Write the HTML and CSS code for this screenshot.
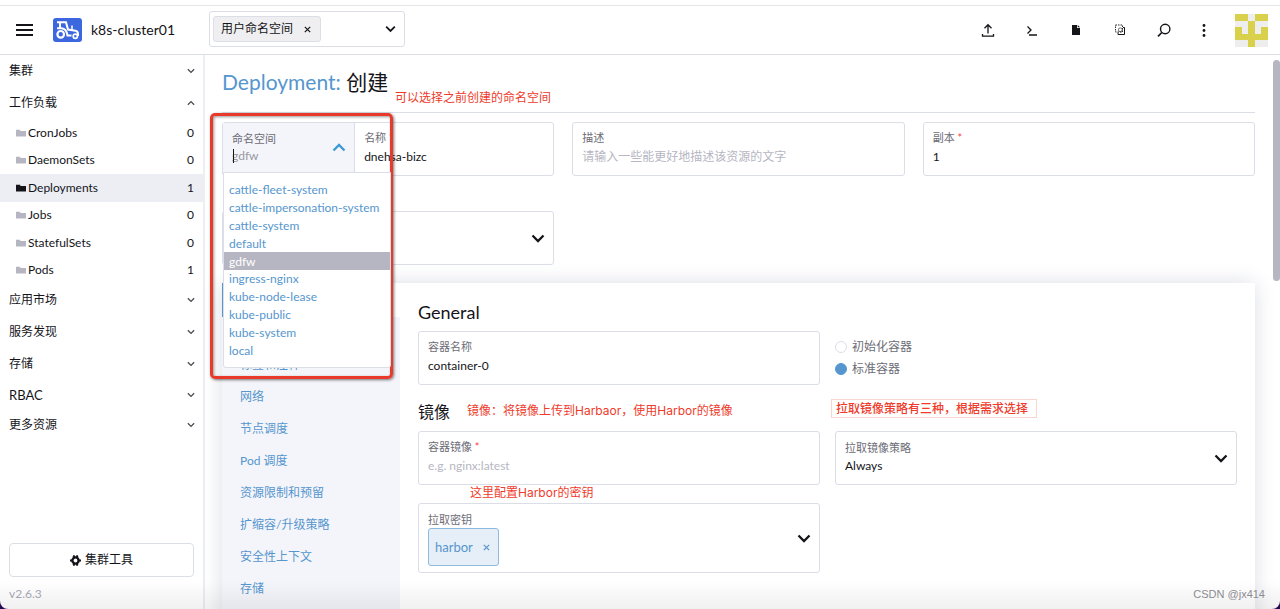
FILE: index.html
```
<!DOCTYPE html>
<html lang="zh-CN">
<head>
<meta charset="utf-8">
<meta name="viewport" content="width=device-width, initial-scale=1">
<title>Deployment: 创建</title>
<link rel="stylesheet" href="styles.css">
</head>
<body>
<svg class="defs" aria-hidden="true">
  <symbol id="chevron" viewBox="0 0 14 9"><path d="M1.500 1.500 7 7l5.500-5.500" fill="none" stroke="currentColor" stroke-width="2.300"/></symbol>
  <symbol id="folder" viewBox="0 0 10 8"><path d="M0 .8h4.300v1.200H10v5.500H0z" fill="currentColor"/></symbol>
</svg>
<div class="app">
  <header class="topbar">
    <button class="icon-btn menu" aria-label="菜单"><svg width="17" height="12" viewBox="0 0 17 12"><path d="M0 1h17M0 6h17M0 11h17" stroke="currentColor" stroke-width="2"/></svg></button>
    <svg class="brand" width="29" height="24" viewBox="0 0 29 24" aria-hidden="true">
      <rect width="29" height="24" rx="3" fill="#3d67df"/>
      <g fill="none" stroke="#fff" stroke-width="2">
        <path d="M4 4.300h9l2 7.200 7.500 1.300q2.500.5 2.500 3.200v2M7 4v6M4 10.300h4.500q5 .5 6 7.200h4"/>
        <path d="M19 7.500v5" stroke-width="1.500"/>
        <circle cx="7.700" cy="16.300" r="3.300" stroke-width="2.200"/>
        <circle cx="22.300" cy="18.200" r="2.100" stroke-width="1.700"/>
      </g>
    </svg>
    <span class="cluster">k8s-cluster01</span>
    <div class="filter">
      <span class="chip">用户命名空间<button class="chip-x" aria-label="移除"><svg width="7" height="7" viewBox="0 0 7 7"><path d="m.8.800 5.400 5.400m0-5.400L.8 6.200" stroke="currentColor" stroke-width="1.200"/></svg></button></span>
      <button class="icon-btn" aria-label="展开"><svg class="chev-md"><use href="#chevron"/></svg></button>
    </div>
    <nav class="tools">
      <button class="icon-btn" aria-label="导入"><svg width="14" height="16" viewBox="0 0 14 16"><path d="M7 11.500V3M3.500 6.200 7 2.700l3.500 3.500M1.500 12v2.200h11V12" fill="none" stroke="currentColor" stroke-width="1.300"/></svg></button>
      <button class="icon-btn" aria-label="命令行"><svg width="14" height="16" viewBox="0 0 14 16"><path d="m2.500 4.500 3.500 3.500L2.500 11.500M4 13h8" fill="none" stroke="currentColor" stroke-width="1.300"/></svg></button>
      <button class="icon-btn" aria-label="配置文件"><svg width="14" height="16" viewBox="0 0 14 16"><path d="M3 3h5v3h3v7H3zM8.700 3 11 5.300H8.700z" fill="currentColor"/></svg></button>
      <button class="icon-btn" aria-label="复制"><svg width="14" height="16" viewBox="0 0 14 16"><rect x="2.500" y="3" width="7" height="7" fill="none" stroke="currentColor" stroke-width=".9" stroke-dasharray="1.500 1"/><path d="M10 5.500h1.500v7H5V10.500" fill="none" stroke="currentColor"/><circle cx="7.300" cy="7.800" r="1.900" fill="none" stroke="currentColor" stroke-width=".6"/></svg></button>
      <button class="icon-btn" aria-label="搜索"><svg width="14" height="16" viewBox="0 0 14 16"><circle cx="8.200" cy="7" r="4.700" fill="none" stroke="currentColor" stroke-width="1.400"/><path d="M4.800 10.500 1 14.300" stroke="currentColor" stroke-width="1.700"/></svg></button>
      <button class="icon-btn" aria-label="更多"><svg width="6" height="16" viewBox="0 0 6 16"><g fill="currentColor"><circle cx="3" cy="3.500" r="1.400"/><circle cx="3" cy="8.500" r="1.400"/><circle cx="3" cy="13.500" r="1.400"/></g></svg></button>
    </nav>
    <svg class="avatar" width="33" height="33" viewBox="0 0 33 33" aria-hidden="true"><path fill="#eee" d="M0 0h33v33H0z"/><path fill="#d9d04c" d="M0 0h13v7H0zM20 0h13v7H20zM13 7h7v26h-7zM0 13h7v7h19v-7h7v13H0z"/></svg>
  </header>

  <div class="body">
    <aside class="side">
      <nav class="side-nav">
        <button class="group">集群<svg class="chev-sm"><use href="#chevron"/></svg></button>
        <button class="group open">工作负载<svg class="chev-sm"><use href="#chevron"/></svg></button>
        <div class="children">
          <a href="#"><svg><use href="#folder"/></svg>CronJobs<span>0</span></a>
          <a href="#"><svg><use href="#folder"/></svg>DaemonSets<span>0</span></a>
          <a href="#" class="active"><svg><use href="#folder"/></svg>Deployments<span>1</span></a>
          <a href="#"><svg><use href="#folder"/></svg>Jobs<span>0</span></a>
          <a href="#"><svg><use href="#folder"/></svg>StatefulSets<span>0</span></a>
          <a href="#"><svg><use href="#folder"/></svg>Pods<span>1</span></a>
        </div>
        <button class="group">应用市场<svg class="chev-sm"><use href="#chevron"/></svg></button>
        <button class="group">服务发现<svg class="chev-sm"><use href="#chevron"/></svg></button>
        <button class="group">存储<svg class="chev-sm"><use href="#chevron"/></svg></button>
        <button class="group short latin">RBAC<svg class="chev-sm"><use href="#chevron"/></svg></button>
        <button class="group short">更多资源<svg class="chev-sm"><use href="#chevron"/></svg></button>
      </nav>
      <button class="cluster-tools"><svg width="11" height="11" viewBox="0 0 11 11"><circle cx="5.500" cy="5.500" r="3.100" fill="none" stroke="currentColor" stroke-width="2.400"/><path d="M3.200.500 4.600 2M7.800.500 6.400 2M3.200 10.500 4.600 9M7.800 10.500 6.400 9M0 5.500h2M9 5.500h2" stroke="currentColor" stroke-width="2"/></svg>集群工具</button>
      <div class="version">v2.6.3</div>
    </aside>

    <main class="main">
      <h1><a href="#">Deployment:</a> 创建</h1>

      <div class="row">
        <div class="field pair">
          <div class="ns">
            <div class="ns-text">
              <label for="ns">命名空间</label>
              <input id="ns" role="combobox" aria-expanded="true" aria-controls="ns-list" placeholder="gdfw">
              <i class="caret"></i>
            </div>
            <svg class="chev-lg up"><use href="#chevron"/></svg>
            <ul class="ns-list" id="ns-list" role="listbox">
              <li role="option">cattle-fleet-system</li>
              <li role="option">cattle-impersonation-system</li>
              <li role="option">cattle-system</li>
              <li role="option">default</li>
              <li role="option" class="selected" aria-selected="true">gdfw</li>
              <li role="option">ingress-nginx</li>
              <li role="option">kube-node-lease</li>
              <li role="option">kube-public</li>
              <li role="option">kube-system</li>
              <li role="option">local</li>
            </ul>
          </div>
          <div class="name">
            <label for="name">名称 <b>*</b></label>
            <input id="name" value="dnehsa-bizc">
          </div>
        </div>
        <div class="field">
          <label for="desc">描述</label>
          <input id="desc" placeholder="请输入一些能更好地描述该资源的文字">
        </div>
        <div class="field">
          <label for="replicas">副本 <b>*</b></label>
          <input id="replicas" value="1">
        </div>
      </div>

      <div class="row second">
        <div class="field pick">
          <select aria-label="类型"><option></option></select>
          <svg class="chev-lg"><use href="#chevron"/></svg>
        </div>
      </div>

      <section class="card">
        <nav class="tabs">
          <a href="#" class="active" aria-label="General"></a>
          <a href="#" aria-label="健康检查"></a>
          <a href="#">标签和注释</a>
          <a href="#">网络</a>
          <a href="#">节点调度</a>
          <a href="#">Pod 调度</a>
          <a href="#">资源限制和预留</a>
          <a href="#">扩缩容/升级策略</a>
          <a href="#">安全性上下文</a>
          <a href="#">存储</a>
        </nav>
        <div class="panel">
          <h2 class="latin">General</h2>
          <div class="cols">
            <div class="field">
              <label for="cname">容器名称</label>
              <input id="cname" value="container-0">
            </div>
            <div class="radios">
              <label><input type="radio" name="kind">初始化容器</label>
              <label><input type="radio" name="kind" checked>标准容器</label>
            </div>
          </div>
          <h2>镜像</h2>
          <div class="cols">
            <div class="field">
              <label for="image">容器镜像 <b>*</b></label>
              <input id="image" placeholder="e.g. nginx:latest">
            </div>
            <div class="field pick">
              <label for="policy">拉取镜像策略</label>
              <select id="policy"><option>Always</option></select>
              <svg class="chev-lg"><use href="#chevron"/></svg>
            </div>
            <div class="field pick secrets">
              <label for="secret">拉取密钥</label>
              <button id="secret" class="secret">harbor<svg width="7" height="7" viewBox="0 0 7 7"><path d="m.8.800 5.400 5.400m0-5.400L.8 6.200" stroke="currentColor" stroke-width="1.200"/></svg></button>
              <svg class="chev-lg"><use href="#chevron"/></svg>
            </div>
          </div>
        </div>
      </section>
      <div class="scroll"></div>
    </main>
  </div>
  <div class="shade"></div>
</div>

<div class="mark-box"></div>
<p class="note note-ns">可以选择之前创建的命名空间</p>
<p class="note note-image">镜像：将镜像上传到Harbaor，使用Harbor的镜像</p>
<p class="note note-policy">拉取镜像策略有三种，根据需求选择</p>
<p class="note note-secret">这里配置Harbor的密钥</p>
<p class="credit">CSDN @jx414</p>
</body>
</html>
```

FILE: styles.css
```
* { box-sizing: border-box; }
body {
  margin: 0;
  position: relative;
  background: #230a55;
  color: #141419;
  font: 13px/18px Lato, "Noto Sans CJK SC", sans-serif;
}
a { color: inherit; text-decoration: none; }
button, input, select { font: inherit; color: inherit; background: none; border: 0; padding: 0; margin: 0; }
h1, h2, p, ul { margin: 0; padding: 0; font-weight: 400; }
.defs { position: absolute; width: 0; height: 0; }

.app {
  position: relative;
  height: 100vh;
  padding-top: 5px;
  display: flex;
  flex-direction: column;
  background: #fff;
  border-radius: 0 0 8px 8px;
  overflow: hidden;
}

.topbar {
  flex: none;
  height: 50px;
  display: flex;
  align-items: center;
  padding: 0 12px 0 16px;
  border-top: 1px solid #e3e3e8;
  border-bottom: 1px solid #dcdee7;
}
.icon-btn { display: flex; align-items: center; justify-content: center; }
.brand { margin-left: 20px; }
.cluster { width: 118px; margin-left: 9px; font-size: 14px; }
.filter {
  width: 196px;
  height: 36px;
  display: flex;
  align-items: center;
  justify-content: space-between;
  margin-bottom: 2px;
  padding: 0 8px 0 3px;
  border: 1px solid #dcdee7;
  border-radius: 3px;
}
.chip {
  display: flex;
  align-items: center;
  gap: 11px;
  height: 26px;
  padding: 0 9px 0 7px;
  font-size: 12px;
  background: #efeff1;
  border: 1px solid #dcdee7;
  border-radius: 3px;
}
.chip-x { display: flex; }
.chev-md { width: 11px; height: 8px; }
.chev-sm { width: 8px; height: 6px; color: #4a4a52; }
.chev-lg { width: 14px; height: 9px; flex: none; }
.tools { display: flex; gap: 30px; margin-left: auto; margin-right: 28px; }

.body { flex: 1; min-height: 0; display: flex; }

.side {
  width: 205px;
  flex: none;
  display: flex;
  flex-direction: column;
  border-right: 2px solid #eceef4;
}
.side-nav { flex: 1; }
.group {
  width: 100%;
  height: 32px;
  display: flex;
  align-items: center;
  justify-content: space-between;
  padding: 0 8px 0 9px;
  font-size: 12px;
}
.group.short { height: 30px; }
.group.latin { font-size: 13px; }
.open svg, .up { transform: rotate(180deg); }
.children { display: grid; grid-auto-rows: 1fr; height: 165px; }
.children a { display: flex; align-items: center; gap: 2px; padding: 0 9px 0 16px; font-size: 12px; }
.children svg { width: 10px; height: 8px; color: #b6b6c2; }
.children span { margin-left: auto; }
.children .active { background: #eceef4; }
.children .active svg { color: #141419; }
.cluster-tools {
  height: 34px;
  margin: 0 9px;
  display: flex;
  align-items: center;
  justify-content: center;
  gap: 4px;
  font-size: 12px;
  border: 1px solid #dcdee7;
  border-radius: 4px;
}
.version { padding: 8px 9px 6px; color: #a9a9b6; font-size: 12px; }

.main { position: relative; flex: 1; min-width: 0; padding: 0 25px 0 17px; }
h1 {
  height: 58px;
  padding-top: 12px;
  font-size: 21px;
  line-height: 30px;
  border-bottom: 1px solid #dcdee7;
}
h1 a { color: #5696ce; }

.row { display: grid; grid-template-columns: repeat(3, 1fr); gap: 18px; margin-top: 9px; }
.row.second { margin-top: 35px; }
.field {
  height: 54px;
  padding: 7px 9px;
  border: 1px solid #dcdee7;
  border-radius: 3px;
}
.field label { display: block; color: #6c6c76; font-size: 11px; line-height: 16px; }
.field b { color: #f64747; font-weight: 400; }
.field input, .field select { display: block; width: 100%; height: 20px; font-size: 12px; appearance: none; outline: 0; }
.field input::placeholder { color: #b6b6c2; opacity: 1; }
.field.pick { position: relative; padding-top: 8px; }
.pick > .chev-lg { position: absolute; right: 8px; top: 50%; margin-top: -4px; }

.field.pair { display: flex; padding: 0; }
.ns {
  position: relative;
  width: 40%;
  height: 49px;
  display: flex;
  align-items: center;
  justify-content: space-between;
  padding: 0 8px 0 9px;
  background: #f4f5fa;
  border-right: 1px solid #dcdee7;
  color: #3d98d3;
}
.ns-text { position: relative; flex: 1; min-width: 0; }
.ns .ns-text input::placeholder { color: #98989f; }
.ns .ns-text input { height: 18px; color: #141419; }
.caret { position: absolute; left: 1px; bottom: 2px; width: 1px; height: 14px; background: #141419; }
.name { flex: 1; min-width: 0; padding: 7px 9px; }
.ns-list {
  position: absolute;
  z-index: 2;
  left: 0;
  top: 49px;
  width: 168px;
  height: 196px;
  display: grid;
  grid-auto-rows: 1fr;
  padding: 8px 0;
  list-style: none;
  background: #fff;
  border: 1px solid #dcdee7;
  border-radius: 0 0 3px 3px;
  color: #5696ce;
  font-size: 12px;
}
.ns-list li { display: flex; align-items: center; padding-left: 5px; line-height: 17px; }
.ns-list .selected { background: #b6b6c2; color: #fff; }

.card {
  display: flex;
  height: 400px;
  margin-top: 18px;
  background: #fff;
  box-shadow: 0 0 20px #dcdee7;
}
.tabs { width: 178px; flex: none; background: #f4f5fa; color: #5696ce; font-size: 12px; }
.tabs a { display: flex; align-items: center; height: 32px; padding-left: 18px; }
.tabs .active { height: 34px; background: #fff; border-left: 1px solid #5696ce; }
.panel { flex: 1; min-width: 0; padding: 18px; }
h2 { font-size: 16px; line-height: 22px; }
h2.latin { font-size: 18px; }
.cols { display: grid; grid-template-columns: 1fr 1fr; gap: 18px 15px; margin: 8px 0 16px; }
.radios { display: flex; flex-direction: column; gap: 4px; padding-top: 7px; color: #6c6c76; font-size: 12px; }
.radios label { display: flex; align-items: center; gap: 5px; }
.radios input { appearance: none; width: 12px; height: 12px; border: 1px solid #dcdee7; border-radius: 50%; }
.radios input:checked { background: #5696ce; border-color: #5696ce; }
.field.secrets { height: 70px; }
.secret {
  display: flex;
  align-items: center;
  gap: 10px;
  height: 38px;
  padding: 0 8px 0 6px;
  color: #5696ce;
  background: #e6eef7;
  border: 1px solid #8dbbe0;
  border-radius: 3px;
}

.scroll { position: absolute; right: 0; top: 5px; width: 7px; height: 221px; background: #b6b6c2; border-radius: 4px; }
.shade { position: absolute; left: 0; right: 0; bottom: 0; height: 28px; background: linear-gradient(transparent, #0000000f); pointer-events: none; }

.mark-box {
  position: absolute;
  left: 210px;
  top: 113px;
  width: 183px;
  height: 266px;
  border: 3px solid #e8392b;
  border-radius: 5px;
  box-shadow: 1px 1px 3px #0008, inset 1px 1px 3px #0006;
  pointer-events: none;
}
.note { position: absolute; color: #ee3b2b; font: 12px/18px Inter, "Noto Sans CJK SC", sans-serif; white-space: nowrap; }
.note-ns { left: 395px; top: 89px; }
.note-image { left: 467px; top: 402px; }
.note-policy { left: 831px; top: 399px; padding: 0 8px 0 4px; border: 1px solid #f9d5d2; line-height: 17px; font-weight: 500; }
.note-secret { left: 470px; top: 484px; }
.credit { position: absolute; right: 15px; bottom: 7px; color: #8b8b90; font: 11px/16px "Liberation Sans", sans-serif; }
```
